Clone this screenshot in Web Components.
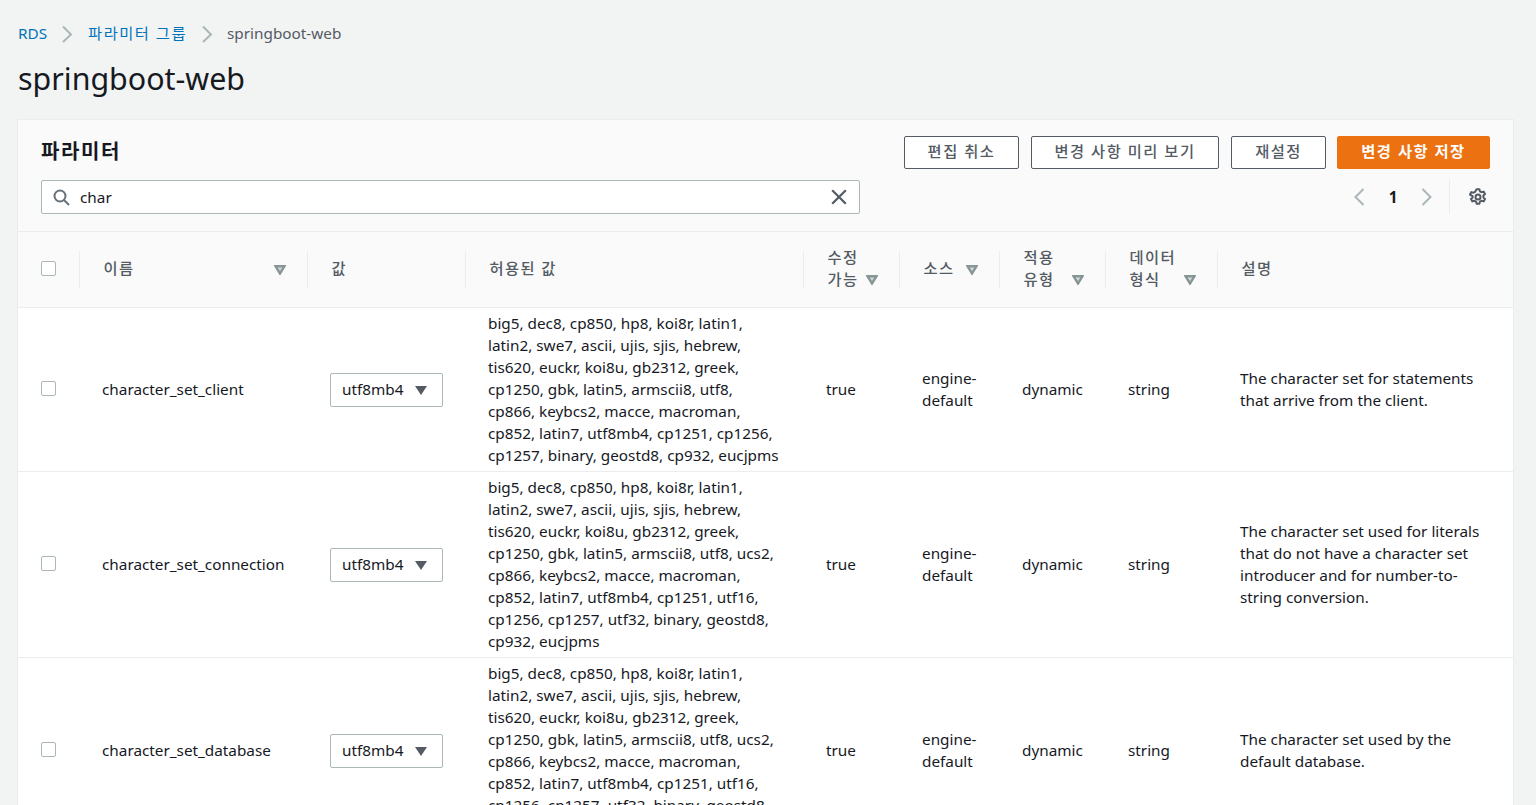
<!DOCTYPE html>
<html lang="ko">
<head>
<meta charset="utf-8">
<title>springboot-web</title>
<style>
html,body{margin:0;height:805px;overflow:hidden;background:#f2f3f3;}
body{font:15.3px/22px "Noto Sans","Noto Sans CJK KR",sans-serif;color:#16191f;padding:0 23px 0 18px;box-sizing:border-box;--cols:62px 228px 158px 338px 96px 100px 106px 112px 1fr;--hcols:61px 228px 158px 338px 96px 100px 106px 112px 1fr;}
</style>
</head>
<body>
<template id="t-crumbs"><style>
:host{display:flex;align-items:center;height:22px;padding-top:22px;color:#545b64}
a{color:#0073bb;text-decoration:none}
.ko{letter-spacing:1.5px}
svg{width:12px;height:18px;margin:2px 14px 0 14px;fill:none;stroke:#aab7b8;stroke-width:2}
svg.f{margin-right:15px}
</style><a>RDS</a><svg class="f" viewBox="0 0 12 18"><path d="M2 1.500 10 9.500 2 17"/></svg><a class="ko">파라미터 그룹</a><svg viewBox="0 0 12 18"><path d="M2 1.500 10 9.500 2 17"/></svg><span>springboot-web</span></template>

<template id="t-title"><style>
:host{display:block;margin-top:13px;height:63px}
h1{margin:0;font-size:30.400px;line-height:44px;font-weight:400;color:#16191f}
</style><h1><slot></slot></h1></template>

<template id="t-btn"><style>
:host{display:inline-flex;box-sizing:border-box;height:33px;padding-bottom:4px;align-items:center;justify-content:center;border:1px solid #545b64;border-radius:2px;background:#fff;color:#545b64;font-weight:500;letter-spacing:1.5px;white-space:pre}
:host([primary]){background:#ec7211;border-color:#ec7211;color:#fff;font-weight:700}
</style><slot></slot></template>

<template id="t-check"><style>
:host{display:block;box-sizing:border-box;width:15px;height:15px;border:1px solid #aab7b8;border-radius:2px;background:#fff}
</style></template>

<template id="t-sort"><style>
:host{display:inline-block;width:12px;height:10px;flex:none}
svg{display:block;width:12px;height:10px;fill:#d5dbdb;stroke:#879596;stroke-width:2.400}
</style><svg viewBox="0 0 12 10"><path d="M1.500 1.200h9L6 8.500z"/></svg></template>

<template id="t-th"><style>
:host{display:flex;align-items:center;box-sizing:border-box;height:37px;border-left:1px solid #eaeded;padding:0 21px 4px 23.500px;color:#545b64;letter-spacing:1.4px;font-weight:500;line-height:22px;position:relative}
.t{white-space:pre-line}
</style><span class="t"><slot></slot></span></template>

<template id="t-select"><style>
:host{display:flex;align-items:center;box-sizing:border-box;width:113px;height:34px;border:1px solid #aab7b8;border-radius:2px;background:#fff;padding:0 15px 2px 11px;justify-content:space-between}
svg{width:12px;height:9px;fill:#545b64;margin-top:2px}
</style><slot></slot><svg viewBox="0 0 12 9"><path d="M0 0h12L6 9z"/></svg></template>

<template id="t-search"><style>
:host{display:flex;align-items:center;box-sizing:border-box;width:819px;height:34px;border:1px solid #aab7b8;border-radius:2px;background:#fff;padding:0 12px 0 11px}
.s{width:17px;height:17px;fill:none;stroke:#687078;stroke-width:2;margin-right:10px}
.x{width:16px;height:16px;fill:none;stroke:#545b64;stroke-width:2.200;margin-left:auto}
</style><svg class="s" viewBox="0 0 17 17"><circle cx="7" cy="7" r="5.500"/><path d="M11 11l5 5"/></svg><slot></slot><svg class="x" viewBox="0 0 16 16"><path d="M1.200 1.200l13.600 13.600M14.800 1.200 1.200 14.800"/></svg></template>

<template id="t-pager"><style>
:host{display:flex;align-items:center;height:34px;position:relative;font-weight:700;color:#16191f;padding-right:3px}
.a{width:12px;height:18px;fill:none;stroke:#aab7b8;stroke-width:2}
.n{width:56px;text-align:center}
.sep{width:1px;height:34px;background:#eaeded;margin:0 19px 0 16px}
.g{width:18px;height:18px;fill:none;stroke:#545b64;stroke-width:2}
</style><svg class="a" viewBox="0 0 12 18"><path d="M10.500 1 2.500 9l8 8"/></svg><span class="n">1</span><svg class="a" viewBox="0 0 12 18"><path d="M1.500 1l8 8-8 8"/></svg><span class="sep"></span><svg class="g" viewBox="0 0 18 18"><circle cx="9" cy="9" r="2.500"/><path d="M7.600 1.200h2.800l.5 2.100 1.600.9 2.100-.6 1.400 2.500-1.600 1.500v1.800l1.600 1.500-1.400 2.500-2.100-.6-1.600.9-.5 2.100H7.600l-.5-2.100-1.600-.9-2.100.6-1.400-2.500 1.600-1.500V8.100L.999 6.600l1.400-2.500 2.100.6 1.600-.9z" stroke-linejoin="round"/></svg></template>

<template id="t-toolbar"><style>
:host{display:block;padding:16px 23px 0 23px;height:112px;box-sizing:border-box;border-bottom:1px solid #eaeded;background:#fafafa}
.r1{display:flex;align-items:center;height:33px;gap:12px}
h2{margin:0 auto 2px 0;font-size:20px;line-height:30px;letter-spacing:1.6px;font-weight:700;color:#16191f}
.r2{display:flex;align-items:center;justify-content:space-between;margin-top:11px}
</style><div class="r1"><h2>파라미터</h2><slot name="actions"></slot></div><div class="r2"><slot name="search"></slot><slot name="pager"></slot></div></template>

<template id="t-head"><style>
:host{display:grid;grid-template-columns:var(--hcols);align-items:center;height:76px;box-sizing:border-box;border-bottom:1px solid #eaeded;background:#fafafa}
.c{padding-left:23px;margin-top:-3px}
</style><div class="c"><aws-check></aws-check></div><slot></slot></template>

<template id="t-row"><style>
:host{display:grid;grid-template-columns:var(--cols);align-items:center;box-sizing:border-box;padding:4px 0 5px;border-bottom:1px solid #eaeded;background:#fff}
.c{padding-left:22px;min-width:0}
.b{padding-left:23px;margin-top:-1px}
.v{padding-left:22px;margin-top:2px}
pre{margin:0;font:inherit;white-space:pre-line}
</style><div class="c b"><aws-check></aws-check></div><div class="c" id="name"></div><div class="v"><aws-select id="val"></aws-select></div><div class="c"><pre id="allowed"></pre></div><div class="c">true</div><div class="c"><pre>engine-
default</pre></div><div class="c">dynamic</div><div class="c">string</div><div class="c"><pre id="desc"></pre></div></template>

<template id="t-card"><style>
:host{display:block;background:#fff;box-shadow:0 0 0 1px #eaeded;height:685px;overflow:hidden}
</style><slot></slot></template>

<aws-crumbs></aws-crumbs>
<aws-title>springboot-web</aws-title>
<aws-card>
  <aws-toolbar>
    <aws-btn slot="actions" style="width:115px">편집 취소</aws-btn>
    <aws-btn slot="actions" style="width:188px">변경 사항 미리 보기</aws-btn>
    <aws-btn slot="actions" style="width:95px">재설정</aws-btn>
    <aws-btn slot="actions" primary style="width:153px;margin-left:-1px">변경 사항 저장</aws-btn>
    <aws-search slot="search">char</aws-search>
    <aws-pager slot="pager"></aws-pager>
  </aws-toolbar>
  <aws-head>
    <aws-th>이름<aws-sort></aws-sort></aws-th>
    <aws-th>값</aws-th>
    <aws-th>허용된 값</aws-th>
    <aws-th>수정
가능<aws-sort></aws-sort></aws-th>
    <aws-th>소스<aws-sort></aws-sort></aws-th>
    <aws-th>적용
유형<aws-sort></aws-sort></aws-th>
    <aws-th>데이터
형식<aws-sort></aws-sort></aws-th>
    <aws-th>설명</aws-th>
  </aws-head>
  <aws-row name="character_set_client" allowed="big5, dec8, cp850, hp8, koi8r, latin1,
latin2, swe7, ascii, ujis, sjis, hebrew,
tis620, euckr, koi8u, gb2312, greek,
cp1250, gbk, latin5, armscii8, utf8,
cp866, keybcs2, macce, macroman,
cp852, latin7, utf8mb4, cp1251, cp1256,
cp1257, binary, geostd8, cp932, eucjpms" desc="The character set for statements
that arrive from the client."></aws-row>
  <aws-row name="character_set_connection" allowed="big5, dec8, cp850, hp8, koi8r, latin1,
latin2, swe7, ascii, ujis, sjis, hebrew,
tis620, euckr, koi8u, gb2312, greek,
cp1250, gbk, latin5, armscii8, utf8, ucs2,
cp866, keybcs2, macce, macroman,
cp852, latin7, utf8mb4, cp1251, utf16,
cp1256, cp1257, utf32, binary, geostd8,
cp932, eucjpms" desc="The character set used for literals
that do not have a character set
introducer and for number-to-
string conversion."></aws-row>
  <aws-row name="character_set_database" allowed="big5, dec8, cp850, hp8, koi8r, latin1,
latin2, swe7, ascii, ujis, sjis, hebrew,
tis620, euckr, koi8u, gb2312, greek,
cp1250, gbk, latin5, armscii8, utf8, ucs2,
cp866, keybcs2, macce, macroman,
cp852, latin7, utf8mb4, cp1251, utf16,
cp1256, cp1257, utf32, binary, geostd8,
cp932, eucjpms" desc="The character set used by the
default database."></aws-row>
</aws-card>
<script>
function def(tag,tpl,init){
  customElements.define(tag,class extends HTMLElement{
    constructor(){super();const r=this.attachShadow({mode:"open"});r.appendChild(document.getElementById(tpl).content.cloneNode(true));}
    connectedCallback(){if(init)init.call(this,this.shadowRoot);}
  });
}
def("aws-crumbs","t-crumbs");
def("aws-title","t-title");
def("aws-btn","t-btn");
def("aws-check","t-check");
def("aws-sort","t-sort");
def("aws-select","t-select");
def("aws-search","t-search");
def("aws-pager","t-pager");
def("aws-toolbar","t-toolbar");
def("aws-head","t-head");
def("aws-card","t-card");
def("aws-th","t-th",function(r){
  const s=this.querySelector("aws-sort");
  if(s){
    const two=this.textContent.includes("\n");
    r.appendChild(s); s.style.marginLeft="auto";
    s.style.marginTop=two?"24px":"4px";
  }
});
def("aws-row","t-row",function(r){
  r.getElementById("name").textContent=this.getAttribute("name");
  r.getElementById("val").textContent="utf8mb4";
  r.getElementById("allowed").textContent=this.getAttribute("allowed");
  r.getElementById("desc").textContent=this.getAttribute("desc");
});
</script>
</body>
</html>
